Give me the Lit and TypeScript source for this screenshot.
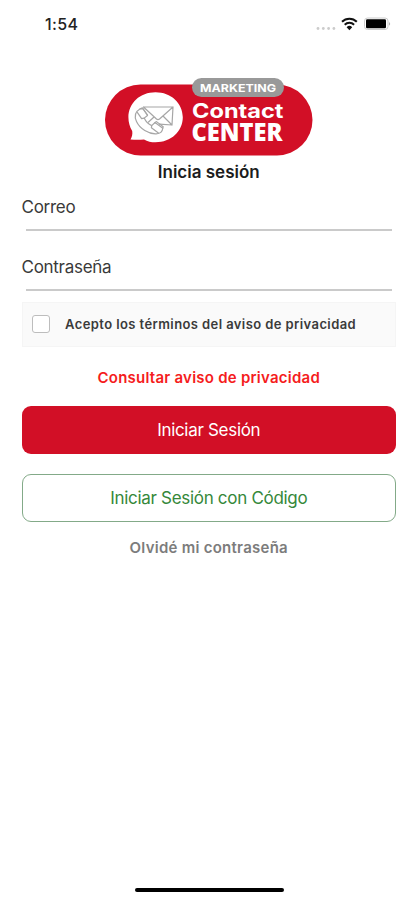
import { LitElement, html, css } from "lit";
import { customElement, property } from "lit/decorators.js";

@customElement("status-bar")
class StatusBar extends LitElement {
  static styles = css`
    :host { display: flex; justify-content: space-between; height: 48px; padding: 0 26px 0 45px; box-sizing: border-box; }
    .time { font-size: 16px; font-weight: 500; line-height: 48px; color: #222; letter-spacing: 0.4px; }
    .icons { display: block; width: 76px; height: 48px; }
  `;
  render() {
    return html`
      <span class="time">1:54</span>
      <svg class="icons" viewBox="315 0 76 48">
        <g fill="#ccc">
          <circle cx="318" cy="28.5" r="1.4" /><circle cx="323.3" cy="28.5" r="1.4" />
          <circle cx="328.6" cy="28.5" r="1.4" /><circle cx="333.9" cy="28.5" r="1.4" />
        </g>
        <g fill="none" stroke="#111" stroke-width="2">
          <path d="M342 21.8a10.4 10.4 0 0 1 14.8 0" />
          <path d="M344.7 24.8a6.7 6.7 0 0 1 9.4 0" />
        </g>
        <path d="M346.6 27.2a4 4 0 0 1 5.6 0l-2.8 3z" fill="#111" />
        <rect x="364.5" y="18" width="23.5" height="11.5" rx="3" fill="#fff" stroke="#ccc" />
        <rect x="366" y="19.3" width="20" height="9" rx="1.2" fill="#000" />
        <path d="M389.2 21.8q1.8 2 0 4z" fill="#999" />
      </svg>
    `;
  }
}

@customElement("brand-logo")
class BrandLogo extends LitElement {
  static styles = css`
    :host { display: flex; justify-content: center; }
    svg { display: block; width: 210px; height: 80px; }
    .badge { font: 700 11px "Inter", sans-serif; fill: #fff; }
    .name { font: 700 20px "Inter", sans-serif; fill: #fff; }
    .kind { font: 800 24px "Open Sans", sans-serif; fill: #fff; }
  `;
  render() {
    return html`
      <svg viewBox="104 77 210 80">
        <rect x="105" y="84.5" width="207.5" height="71" rx="35.5" fill="#d20f26" />
        <rect x="192" y="78" width="92" height="19" rx="9.5" fill="#999" />
        <path d="M155.5 92.3c15.5 0 27.3 10.9 27.3 25s-11.8 25-27.3 25c-4.4 0-8-1-11.5-2.9-4.500.6-9 .5-13.5.1 1.5-2.6 2.2-5.4 1.7-8.5-2.4-3.9-3.8-8.5-3.8-13.7 0-14.1 11.6-25 27.1-25z" fill="#fff" />
        <g fill="none" stroke="#a6a6a6" stroke-width="1.2" stroke-linejoin="round" stroke-linecap="round">
          <path d="M143.5 107h29.5l-1 18-12.5-.8M143.5 107l13 12q1.5 1.2 3 0l13.500-12M163 116l9 9M148.5 122l5.500-5" />
          <path fill="#fff" d="M140.2 108.800c-4.700 2.800-6 7.700-3.700 12.700 3.300 7.200 12.200 12.700 19.700 12.300 3.400-.2 6.200-2 6.600-5.600l-7.800-5.700-3.300 3.100c-3-1.200-6-4.100-7.500-7.500l3.300-2.600-4.600-6.800z" />
          <path d="M140.200 108.800l2.200-.9 5.200 7.100-.1.500M155 122.500l1.500-.9 6.700 5.200-.4 1.400M137.300 112.300l4.300 6.300 2.600-.5M151.700 125.600l-.3 2.200 7 5.300" />
        </g>
        <text class="badge" x="200" y="91.5" textLength="76" lengthAdjust="spacingAndGlyphs">MARKETING</text>
        <text class="name" x="192" y="118.2" textLength="91.5" lengthAdjust="spacingAndGlyphs">Contact</text>
        <text class="kind" x="191.5" y="140.7" textLength="91" lengthAdjust="spacingAndGlyphs">CENTER</text>
      </svg>
    `;
  }
}

@customElement("line-field")
class LineField extends LitElement {
  @property() label = "";
  static styles = css`
    :host { display: flex; flex-direction: column; justify-content: space-between; height: 35.5px; }
    .label { font-size: 17px; line-height: 24px; color: #3a3a3a; letter-spacing: -0.28px; }
    .line { height: 1.5px; margin: 0 4px; background: #cacaca; }
  `;
  render() {
    return html`<span class="label">${this.label}</span><div class="line"></div>`;
  }
}

@customElement("app-root")
class AppRoot extends LitElement {
  static styles = css`
    :host { display: flex; flex-direction: column; height: 900px; background: #fff; font-family: "Inter", "Liberation Sans", sans-serif; }
    brand-logo { margin-top: 29px; }
    .form { display: flex; flex-direction: column; padding: 0 21px 0 21.5px; }
    .title { margin: 2px 0 0; font-size: 17px; line-height: 26px; font-weight: 600; color: #1c1c1c; text-align: center; }
    .first { margin-top: 10px; }
    .second { margin-top: 24.5px; }
    .terms { display: flex; align-items: center; gap: 15px; height: 45px; margin-top: 11.5px; padding: 0 0 2px 9.5px; box-sizing: border-box; background: #fafafa; border: 1px solid #f5f5f5; font-size: 13px; font-weight: 600; color: #3a3a3a; letter-spacing: 0.41px; white-space: nowrap; }
    .box { width: 18px; height: 18px; box-sizing: border-box; border: 1.5px solid #bdbdbd; border-radius: 3px; background: #fff; }
    .link { margin-top: 18.5px; line-height: 24px; font-size: 15px; font-weight: 600; color: #f51c20; letter-spacing: 0.24px; text-align: center; }
    .button { display: flex; align-items: center; justify-content: center; height: 48px; margin-top: 16.5px; box-sizing: border-box; border: 0; border-radius: 9px; background: #d20f26; color: #fff; font: inherit; font-size: 17px; letter-spacing: -0.3px; padding: 0; }
    .outline { height: 48.5px; margin-top: 19.5px; border: 1px solid #83aa88; background: #fff; color: #35883a; }
    .forgot { margin-top: 14px; line-height: 24px; font-size: 15px; font-weight: 600; color: #7c7c7c; letter-spacing: 0.26px; text-align: center; }
    .home { width: 149px; height: 4px; margin: auto auto 8px 134.5px; border-radius: 2px; background: #000; }
  `;
  render() {
    return html`
      <status-bar></status-bar>
      <brand-logo></brand-logo>
      <div class="form">
        <h1 class="title">Inicia sesión</h1>
        <line-field class="first" label="Correo"></line-field>
        <line-field class="second" label="Contraseña"></line-field>
        <div class="terms"><span class="box"></span><span>Acepto los términos del aviso de privacidad</span></div>
        <div class="link">Consultar aviso de privacidad</div>
        <button class="button">Iniciar Sesión</button>
        <button class="button outline">Iniciar Sesión con Código</button>
        <div class="forgot">Olvidé mi contraseña</div>
      </div>
      <div class="home"></div>
    `;
  }
}
